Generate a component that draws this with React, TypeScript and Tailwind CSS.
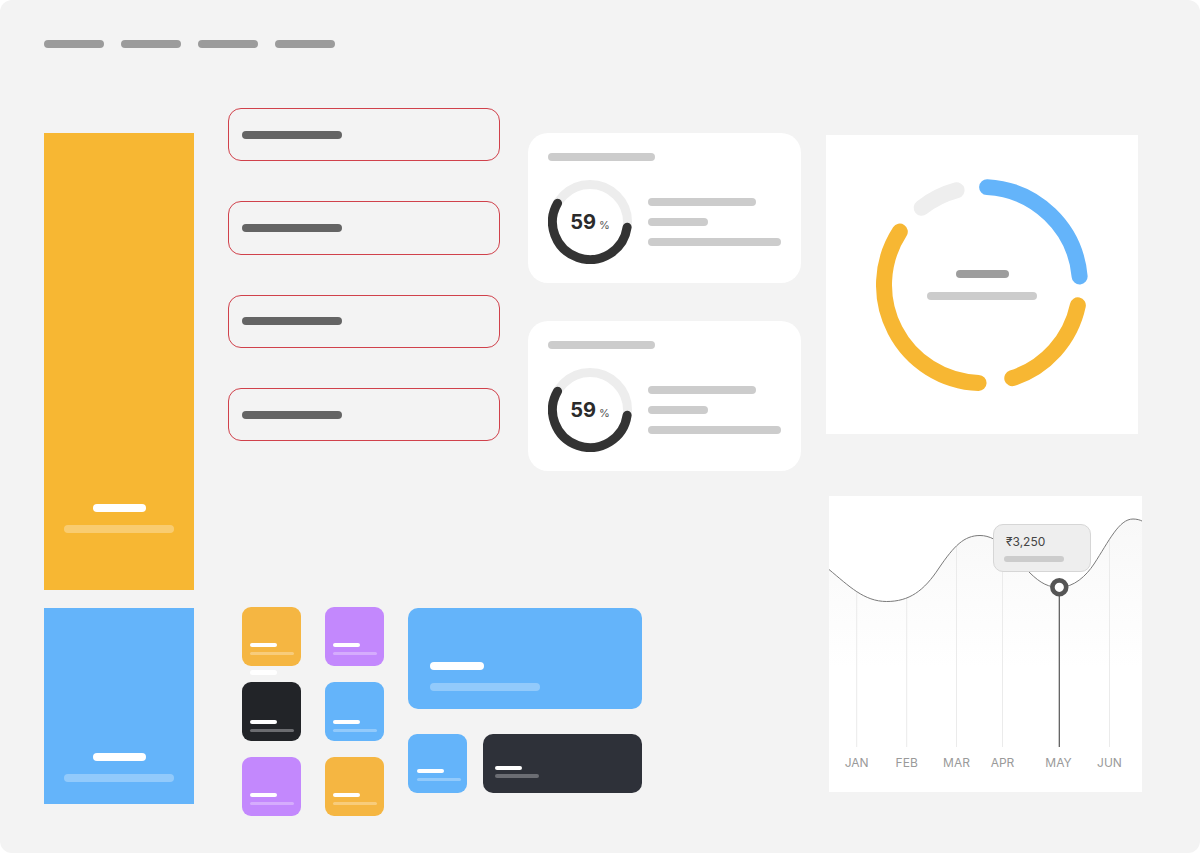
import React from "react";

const toXY = (deg: number, r: number, c: number) => {
  const a = (deg * Math.PI) / 180;
  return [c + r * Math.cos(a), c + r * Math.sin(a)];
};

function arcPath(a0: number, a1: number, r: number, c: number) {
  const [x0, y0] = toXY(a0, r, c);
  const [x1, y1] = toXY(a1, r, c);
  const large = a1 - a0 > 180 ? 1 : 0;
  return `M${x0.toFixed(2)} ${y0.toFixed(2)} A${r} ${r} 0 ${large} 1 ${x1.toFixed(2)} ${y1.toFixed(2)}`;
}

function NavBars() {
  return (
    <nav className="flex gap-[17px]">
      {[0, 1, 2, 3].map((i) => (
        <div key={i} className="h-2 w-[60px] rounded-full bg-[#9b9b9b]" />
      ))}
    </nav>
  );
}

function TallPanel({ color, light, height, bottom }: { color: string; light: string; height: string; bottom: string }) {
  return (
    <div className={`flex w-[150px] flex-col items-center justify-end ${color} ${height} ${bottom}`}>
      <div className="h-2 w-[53px] rounded-full bg-white" />
      <div className={`mt-[13px] h-[8.5px] w-[110px] rounded-full ${light}`} />
    </div>
  );
}

function InputRow() {
  return (
    <div className="flex h-[53.33px] items-center rounded-[13px] border border-[#d0414b] pl-[13px]">
      <div className="h-2 w-[100px] rounded-full bg-[#646464]" />
    </div>
  );
}

function SmallDonut() {
  const c = 42;
  const r = 37.5;
  const [x0, y0] = toXY(210, r, c);
  const [x1, y1] = toXY(8, r, c);
  return (
    <div className="relative h-[84px] w-[84px] shrink-0">
      <svg width="84" height="84" viewBox="0 0 84 84">
        <circle cx={c} cy={c} r={r} fill="none" stroke="#ededed" strokeWidth="9" />
        <path
          d={`M${x0} ${y0} A${r} ${r} 0 1 0 ${x1} ${y1}`}
          fill="none"
          stroke="#333333"
          strokeWidth="9"
          strokeLinecap="round"
        />
      </svg>
      <div className="absolute inset-0 flex items-center justify-center">
        <span className="flex items-baseline">
          <span className="text-[20px] font-bold leading-none text-[#2b2b2b]">59</span>
          <span className="ml-[3px] text-[11px] leading-none text-[#555555]">%</span>
        </span>
      </div>
    </div>
  );
}

function StatCard() {
  return (
    <div className="flex h-[150px] flex-col rounded-[20px] bg-white pl-5 pt-5">
      <div className="h-2 w-[107px] rounded-full bg-[#cccccc]" />
      <div className="mt-[19px] flex items-center">
        <SmallDonut />
        <div className="ml-4 flex flex-col gap-3">
          <div className="h-2 w-[108px] rounded-full bg-[#cccccc]" />
          <div className="h-2 w-[60px] rounded-full bg-[#cccccc]" />
          <div className="h-2 w-[133px] rounded-full bg-[#cccccc]" />
        </div>
      </div>
    </div>
  );
}

function Tile({ color, light, pb, extra }: { color: string; light: string; pb: string; extra?: boolean }) {
  return (
    <div className={`relative flex h-[59px] w-[59px] flex-col justify-end rounded-[9px] px-2 ${color} ${pb}`}>
      <div className="h-1 w-[27px] rounded-full bg-white" />
      <div className={`mt-[4.5px] h-[3.5px] w-[44px] rounded-full ${light}`} />
      {extra && <div className="absolute left-2 top-[63px] h-[4.5px] w-[27px] rounded-full bg-white" />}
    </div>
  );
}

function BigDonut() {
  const c = 106;
  const r = 98;
  const segs = [
    { a0: -87, a1: -5, color: "#64b4fa" },
    { a0: 12, a1: 72, color: "#f7b733" },
    { a0: 92, a1: 213, color: "#f7b733" },
    { a0: 232, a1: 255, color: "#eeeeee" },
  ];
  return (
    <div className="flex h-[299px] w-[312px] items-center justify-center bg-white">
      <div className="relative h-[212px] w-[212px]">
        <svg width="212" height="212" viewBox="0 0 212 212">
          {segs.map((s, i) => (
            <path
              key={i}
              d={arcPath(s.a0, s.a1, r, c)}
              fill="none"
              stroke={s.color}
              strokeWidth="16"
              strokeLinecap="round"
            />
          ))}
        </svg>
        <div className="absolute inset-0 flex flex-col items-center justify-center gap-[14px]">
          <div className="h-2 w-[53px] rounded-full bg-[#9d9d9d]" />
          <div className="h-2 w-[110px] rounded-full bg-[#cccccc]" />
        </div>
      </div>
    </div>
  );
}

const curve =
  "M0,73.5 C20,90 35,105.5 57.7,105.5 C80,105.5 95,95 110,72 C125,50 135,39.5 151,39.5 C170,39.5 185,60 200,76 C212,88 220,91.3 230.3,91.3 C245,91.3 257,80 265,68 C280,45 290,23 304,23 C308,23 311,24 313,25";

const months = [
  { label: "JAN", x: 27.7 },
  { label: "FEB", x: 77.7 },
  { label: "MAR", x: 127.5 },
  { label: "APR", x: 173.5 },
  { label: "MAY", x: 229.5 },
  { label: "JUN", x: 280.5 },
];

function LineChart() {
  return (
    <div className="relative ml-[3px] h-[296px] w-[313px] bg-white">
      <svg width="313" height="296" viewBox="0 0 313 296">
        <defs>
          <linearGradient id="fade" x1="0" y1="0" x2="0" y2="1">
            <stop offset="0" stopColor="#f8f8f8" />
            <stop offset="0.65" stopColor="#ffffff" />
          </linearGradient>
        </defs>
        <path d={`${curve} L313,251 L0,251 Z`} fill="url(#fade)" />
        {months
          .filter((m) => m.label !== "MAY")
          .map((m) => (
            <line key={m.label} x1={m.x} y1="0" x2={m.x} y2="251" stroke="#ebebeb" strokeWidth="1" />
          ))}
        <path d={`M0,0 L0,73.5 ${curve.slice(8)} L313,0 Z`} fill="#ffffff" />
        <path d={curve} fill="none" stroke="#7a7a7a" strokeWidth="1" />
        <line x1="230.3" y1="91" x2="230.3" y2="251" stroke="#555555" strokeWidth="1.2" />
        <circle cx="230.3" cy="91.3" r="6.9" fill="#ffffff" stroke="#555555" strokeWidth="4.6" />
        {months.map((m) => (
          <text
            key={m.label}
            x={m.x}
            y="271"
            textAnchor="middle"
            fontSize="12"
            fill="#9a9a9a"
            fontFamily="Inter, 'Noto Sans', sans-serif"
          >
            {m.label}
          </text>
        ))}
      </svg>
      <div className="absolute left-[164px] top-[28px] flex h-[48px] w-[98px] flex-col rounded-[10px] border border-[#d6d6d6] bg-[#eeeeee] pl-[10px] pt-[9px]">
        <span className="pl-[2px] text-[12px] leading-4 text-[#444444]">₹3,250</span>
        <div className="mt-[6px] h-[6px] w-[60px] rounded-full bg-[#cccccc]" />
      </div>
    </div>
  );
}

export default function App() {
  return (
    <div className="min-h-screen bg-white font-['Inter','Noto_Sans',sans-serif]">
      <div className="h-[853px] overflow-hidden rounded-[12px] bg-[#f3f3f3] pl-[44px] pt-10">
        <NavBars />
        <div className="flex">
          <div className="flex flex-col gap-[18px] pt-[85px]">
            <TallPanel color="bg-[#f7b733]" light="bg-white/30" height="h-[457px]" bottom="pb-[57px]" />
            <TallPanel color="bg-[#64b4fa]" light="bg-white/30" height="h-[196px]" bottom="pb-[22px]" />
          </div>

          <div className="ml-[34px] flex flex-col">
            <div className="flex">
              <div className="flex w-[272px] flex-col gap-10 pt-[60px]">
                <InputRow />
                <InputRow />
                <InputRow />
                <InputRow />
              </div>
              <div className="ml-[28px] flex w-[273px] flex-col gap-[38px] pt-[85px]">
                <StatCard />
                <StatCard />
              </div>
            </div>

            <div className="ml-[14px] mt-[136px] flex gap-6">
              <div className="grid grid-cols-[59px_59px] gap-x-6 gap-y-4">
                <Tile color="bg-[#f5b642]" light="bg-white/30" pb="pb-[11px]" extra />
                <Tile color="bg-[#c388fd]" light="bg-white/30" pb="pb-[11px]" />
                <Tile color="bg-[#222428]" light="bg-[#6b6c70]" pb="pb-[9px]" />
                <Tile color="bg-[#64b4fa]" light="bg-white/30" pb="pb-[9px]" />
                <Tile color="bg-[#c388fd]" light="bg-white/30" pb="pb-[11px]" />
                <Tile color="bg-[#f5b642]" light="bg-white/30" pb="pb-[11px]" />
              </div>
              <div className="mt-px flex w-[234px] flex-col">
                <div className="flex h-[101px] flex-col justify-end rounded-[10px] bg-[#64b4fa] pb-[18px] pl-[22px]">
                  <div className="h-2 w-[54px] rounded-full bg-white" />
                  <div className="mt-[13.5px] h-2 w-[110px] rounded-full bg-white/30" />
                </div>
                <div className="mt-[25px] flex h-[59px] gap-4">
                  <div className="flex w-[59px] flex-col justify-end rounded-[9px] bg-[#64b4fa] px-[9px] pb-3">
                    <div className="h-1 w-[27px] rounded-full bg-white" />
                    <div className="mt-[4.5px] h-[3.5px] w-[44px] rounded-full bg-white/30" />
                  </div>
                  <div className="flex flex-1 flex-col justify-end rounded-[10px] bg-[#2e3139] pb-[15.5px] pl-3">
                    <div className="h-[4.5px] w-[27px] rounded-full bg-white" />
                    <div className="mt-1 h-[3.5px] w-[44px] rounded-full bg-[#6b6d73]" />
                  </div>
                </div>
              </div>
            </div>
          </div>

          <div className="ml-[25px] flex flex-col pt-[87px]">
            <BigDonut />
            <div className="mt-[62px]">
              <LineChart />
            </div>
          </div>
        </div>
      </div>
    </div>
  );
}
